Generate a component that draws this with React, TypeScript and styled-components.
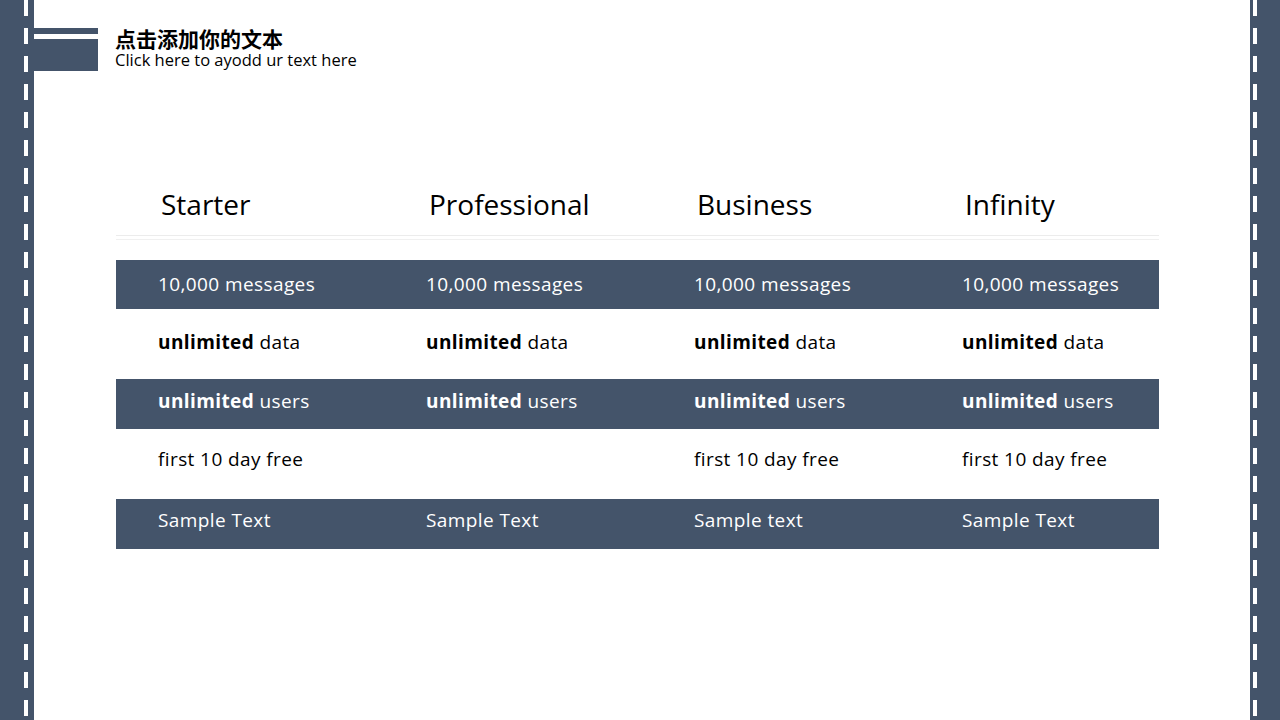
import React from "react";
import styled, { createGlobalStyle } from "styled-components";

const ink = "#44546a";

const GlobalStyle = createGlobalStyle`
  html, body {
    margin: 0;
    padding: 0;
    background: #ffffff;
  }
  body {
    font-family: "Open Sans", "Noto Sans CJK SC", sans-serif;
  }
`;

const Page = styled.div`
  display: flex;
  width: 1280px;
  height: 720px;
  overflow: hidden;
  background: #ffffff;
`;

const Stripe = styled.div<{ $width: number; $dashAt: number }>`
  flex: none;
  width: ${({ $width }) => $width}px;
  height: 100%;
  background-color: ${ink};
  background-image: repeating-linear-gradient(
    to bottom,
    #ffffff 0px,
    #ffffff 16px,
    transparent 16px,
    transparent 28px
  );
  background-size: 4px 100%;
  background-position: ${({ $dashAt }) => $dashAt}px 0;
  background-repeat: no-repeat;
`;

const Main = styled.div`
  flex: 1;
  display: flex;
  flex-direction: column;
`;

const Header = styled.header`
  display: flex;
  align-items: flex-start;
  gap: 17px;
  padding-top: 28px;
`;

const Mark = styled.div`
  display: flex;
  flex-direction: column;
  gap: 5px;
  width: 64px;
`;

const MarkBar = styled.div<{ $h: number }>`
  height: ${({ $h }) => $h}px;
  background: ${ink};
`;

const TitleBlock = styled.div`
  display: flex;
  flex-direction: column;
  gap: 2px;
`;

const Title = styled.h1`
  margin: 0;
  font-family: "Noto Sans CJK SC", sans-serif;
  font-size: 21px;
  font-weight: 700;
  line-height: 21px;
  color: #000000;
`;

const Subtitle = styled.p`
  margin: 0;
  font-family: "Open Sans", sans-serif;
  font-size: 16.5px;
  line-height: 18px;
  color: #000000;
`;

const Table = styled.div`
  width: 1043px;
  margin: 108px 0 0 82px;
`;

const Columns = styled.div`
  display: grid;
  grid-template-columns: 268px 268px 268px 1fr;
`;

const HeadRow = styled(Columns)`
  height: 56px;
  border-bottom: 1px solid #ececec;
`;

const HeadCell = styled.div`
  padding-left: 45px;
  font-family: "Open Sans", sans-serif;
  font-size: 28px;
  line-height: 50px;
  color: #000000;
`;

const Rule = styled.div`
  height: 1px;
  margin-top: 3px;
  margin-bottom: 20px;
  background: #f0f0f0;
`;

const Row = styled(Columns)<{ $dark: boolean; $h: number }>`
  align-items: center;
  height: ${({ $h }) => $h}px;
  background: ${({ $dark }) => ($dark ? ink : "transparent")};
  color: ${({ $dark }) => ($dark ? "#ffffff" : "#000000")};
`;

const Cell = styled.div<{ $lift?: number }>`
  padding-left: 42px;
  font-family: "Open Sans", sans-serif;
  font-size: 19px;
  letter-spacing: 0.4px;
  line-height: 24px;
  margin-top: ${({ $lift }) => ($lift ? -$lift : 0)}px;

  b {
    font-weight: 700;
  }
`;

const plans = ["Starter", "Professional", "Business", "Infinity"];

type RowData = { dark: boolean; h: number; lift?: number; cells: React.ReactNode[] };

const unlimited = (word: string) => (
  <>
    <b>unlimited</b> {word}
  </>
);

const rows: RowData[] = [
  { dark: true, h: 49, lift: 1, cells: Array(4).fill("10,000 messages") },
  { dark: false, h: 70, lift: 4, cells: Array(4).fill(unlimited("data")) },
  { dark: true, h: 50, lift: 7, cells: Array(4).fill(unlimited("users")) },
  {
    dark: false,
    h: 70,
    lift: 10,
    cells: ["first 10 day free", "", "first 10 day free", "first 10 day free"],
  },
  {
    dark: true,
    h: 50,
    lift: 8,
    cells: ["Sample Text", "Sample Text", "Sample text", "Sample Text"],
  },
];

export default function App() {
  return (
    <Page>
      <GlobalStyle />
      <Stripe $width={34} $dashAt={24} />
      <Main>
        <Header>
          <Mark>
            <MarkBar $h={6} />
            <MarkBar $h={32} />
          </Mark>
          <TitleBlock>
            <Title>点击添加你的文本</Title>
            <Subtitle>Click here to ayodd ur text here</Subtitle>
          </TitleBlock>
        </Header>

        <Table>
          <HeadRow>
            {plans.map((p) => (
              <HeadCell key={p}>{p}</HeadCell>
            ))}
          </HeadRow>
          <Rule />
          {rows.map((r, i) => (
            <Row key={i} $dark={r.dark} $h={r.h}>
              {r.cells.map((c, j) => (
                <Cell key={j} $lift={r.lift}>
                  {c}
                </Cell>
              ))}
            </Row>
          ))}
        </Table>
      </Main>
      <Stripe $width={30} $dashAt={3} />
    </Page>
  );
}
